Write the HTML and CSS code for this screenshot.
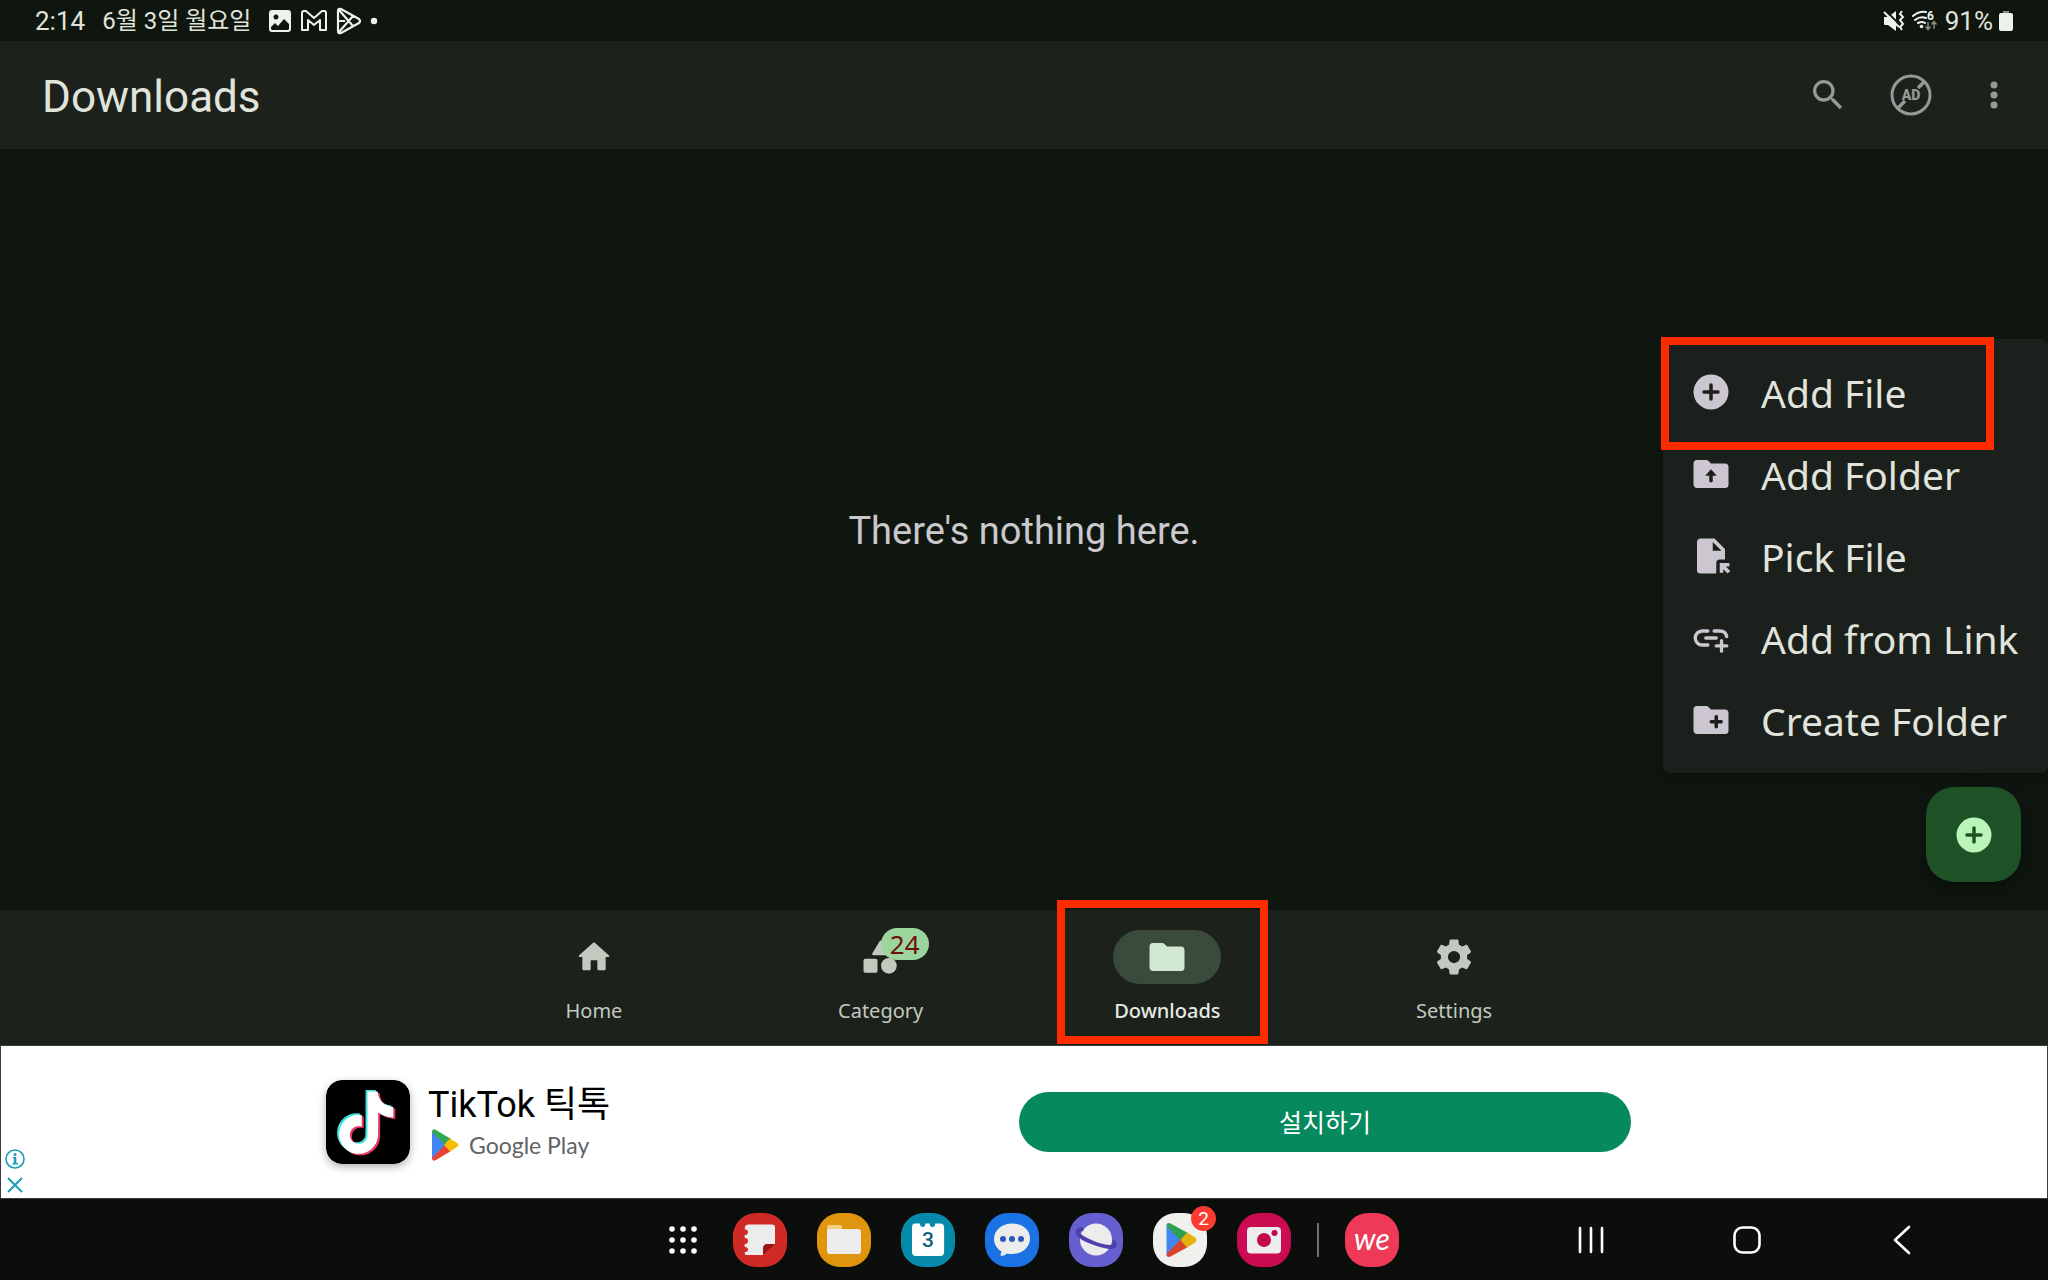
FILE: index.html
```html
<!DOCTYPE html>
<html lang="ko">
<head>
<meta charset="utf-8">
<title>Downloads</title>
<meta name="viewport" content="width=device-width, initial-scale=1">
<link rel="stylesheet" href="styles.css">
</head>
<body>
<div class="screen">
  <div class="status">
    <div class="status-left">
      <span class="clock">2:14</span>
      <span class="date">6월 3일 월요일</span>
      <span class="notices">
        <svg width="24" height="24" viewBox="0 0 24 24"><path fill="#eef1ec" fill-rule="evenodd" d="M4 1h16a3 3 0 0 1 3 3v16a3 3 0 0 1-3 3H4a3 3 0 0 1-3-3V4a3 3 0 0 1 3-3zM3 18v2l1 1h16l1-1v-5l-5-5-6 7-3-3zM8 5.500a2.500 2.500 0 1 0 .01 0z"/></svg>
        <svg width="28" height="24" viewBox="0 0 28 24"><path fill="none" stroke="#eef1ec" stroke-width="2" stroke-linejoin="round" d="M2 21V4q0-2 2-2h2l8 7 8-7h2q2 0 2 2v17h-6V11l-6 5-6-5v10z"/></svg>
        <svg width="26" height="28" viewBox="0 0 26 28"><path fill="none" stroke="#eef1ec" stroke-width="2.200" stroke-linejoin="round" d="M2 4q0-3 3-2l18 10q2 2 0 4L5 26q-3 1-3-2zM3 3l14 16M3 25L17 9M9 14l-6 0"/></svg>
        <svg width="8" height="8" viewBox="0 0 8 8"><circle cx="4" cy="4" r="3.200" fill="#eef1ec"/></svg>
      </span>
    </div>
    <div class="status-right">
      <svg width="22" height="22" viewBox="0 0 22 22"><path fill="#eef1ec" d="M1 7h4l8-6v20l-8-6H2q-1 0-1-1z"/><path fill="none" stroke="#101710" stroke-width="2" d="M3 1l13 13"/><path fill="none" stroke="#eef1ec" stroke-width="2" d="M1 2l15 15M19 1l-2 3 3 3-3 3 3 4-3 3 2 3"/></svg>
      <svg width="28" height="22" viewBox="0 0 28 22"><path fill="none" stroke="#eef1ec" stroke-width="2" stroke-linecap="round" d="M2 6q6-5 13-4M4 10q5-4 11-2M7 13q4-2 7 0"/><circle cx="10.500" cy="16.500" r="1.800" fill="#eef1ec"/><path fill="none" stroke="#858b84" stroke-width="1.500" d="M17 12v7M14.500 16.500l2.500 3 2.500-3M23 19v-7M20.500 14.500l2.500-3 2.500 3"/><text class="wifi-gen" x="16" y="10">6</text></svg>
      <span class="battery-text">91%</span>
      <svg width="14" height="22" viewBox="0 0 14 22"><path fill="#858b84" d="M4 1h6v3H4z"/><rect y="3" width="14" height="18" rx="2" fill="#eef1ec"/></svg>
    </div>
  </div>

  <header class="appbar">
    <h1>Downloads</h1>
    <div class="actions">
      <button aria-label="Search"><svg width="40" height="40" viewBox="0 0 24 24"><path fill="#959b94" d="M15.500 14h-.79l-.28-.27A6.470 6.470 0 0 0 16 9.500 6.500 6.500 0 1 0 9.500 16c1.610 0 3.090-.59 4.230-1.570l.27.28v.79l5 4.990L20.490 19zm-6 0C7.010 14 5 11.990 5 9.500S7.010 5 9.500 5 14 7.010 14 9.500 11.990 14 9.500 14z"/></svg></button>
      <button aria-label="Remove ads"><svg width="42" height="42" viewBox="0 0 42 42"><circle cx="21" cy="21" r="19" fill="none" stroke="#959b94" stroke-width="3"/><path stroke="#959b94" stroke-width="3.500" d="M8 34l7-7M28 14l7-7"/><text class="ad-glyph" x="21" y="26" text-anchor="middle">AD</text></svg></button>
      <button aria-label="More options"><svg width="40" height="40" viewBox="0 0 24 24"><g fill="#959b94"><circle cx="12" cy="6" r="2.100"/><circle cx="12" cy="12" r="2.100"/><circle cx="12" cy="18" r="2.100"/></g></svg></button>
    </div>
  </header>

  <main class="content">
    <p class="empty">There's nothing here.</p>
    <div class="menu" role="menu">
      <button class="menu-item" role="menuitem"><svg width="42" height="42" viewBox="0 0 24 24"><path d="M12 2a10 10 0 1 0 0 20 10 10 0 0 0 0-20zm4 11h-3v3q0 1-1 1t-1-1v-3H8q-1 0-1-1t1-1h3V8q0-1 1-1t1 1v3h3q1 0 1 1t-1 1z"/></svg>Add File<span class="mark mark-menu"></span></button>
      <button class="menu-item" role="menuitem"><svg width="42" height="42" viewBox="0 0 24 24"><path d="M20 6h-8l-1.400-1.400Q10 4 9.200 4H4a2 2 0 0 0-2 2v12c0 1.100.9 2 2 2h16a2 2 0 0 0 2-2V8a2 2 0 0 0-2-2zm-7 7v3q0 .8-1 .8t-1-.8v-3H8.700L12 9.300l3.300 3.700z"/></svg>Add Folder</button>
      <button class="menu-item" role="menuitem"><svg width="42" height="42" viewBox="0 0 24 24"><path d="M15 22H6a2 2 0 0 1-2-2V4c0-1.100.9-2 2-2h8l6 6v6h-3a2 2 0 0 0-2 2zM13 4v5h5zM17 16h5.500v2h-2l2.500 2.500-1.500 1.500-2.500-2.500v2h-2z"/></svg>Pick File</button>
      <button class="menu-item" role="menuitem"><svg width="42" height="42" viewBox="0 0 24 24"><path fill="none" stroke="#cbc6d0" stroke-width="1.900" stroke-linecap="round" d="M10.200 8H7a4 4 0 0 0 0 8h3.200M13.800 8H17q3.400 0 4 3.200M9 12h6M18 13.500v6M15 16.500h6"/></svg>Add from Link</button>
      <button class="menu-item" role="menuitem"><svg width="42" height="42" viewBox="0 0 24 24"><path d="M20 6h-8l-1.400-1.400Q10 4 9.200 4H4a2 2 0 0 0-2 2v12c0 1.100.9 2 2 2h16a2 2 0 0 0 2-2V8a2 2 0 0 0-2-2zm-2 8h-2v2q0 .8-1 .8t-1-.8v-2h-2q-.8 0-.8-1t.8-1h2v-2q0-.8 1-.8t1 .8v2h2q.8 0 .8 1t-.8 1z"/></svg>Create Folder</button>
    </div>
    <button class="fab" aria-label="Add"><svg width="42" height="42" viewBox="0 0 24 24"><path fill="#b9f5b8" d="M12 2a10 10 0 1 0 0 20 10 10 0 0 0 0-20zm4 11h-3v3q0 1-1 1t-1-1v-3H8q-1 0-1-1t1-1h3V8q0-1 1-1t1 1v3h3q1 0 1 1t-1 1z"/></svg></button>
  </main>

  <nav class="tabs">
    <a class="tab" href="#home"><span class="pill"><svg width="40" height="40" viewBox="0 0 24 24"><path fill="#c2c9be" d="M10 19v-5h4v5c0 .55.45 1 1 1h3c.55 0 1-.45 1-1v-7h1.700c.46 0 .68-.57.33-.87L12.670 3.600c-.38-.34-.96-.34-1.340 0l-8.360 7.530c-.34.3-.13.87.33.87H5v7c0 .55.45 1 1 1h3c.55 0 1-.45 1-1z"/></svg></span><span>Home</span></a>
    <a class="tab" href="#category"><span class="pill"><svg width="42" height="42" viewBox="0 0 24 24"><path fill="#c2c9be" d="M11.200 3L7 10q-.4 1 .7 1h8.600q1.100 0 .7-1L12.800 3q-.8-1-1.600 0zM3 13h6q1 0 1 1v6q0 1-1 1H3q-1 0-1-1v-6q0-1 1-1z"/><circle cx="16.500" cy="17" r="4.500" fill="#c2c9be"/></svg><span class="badge">24</span></span><span>Category</span></a>
    <a class="tab active" href="#downloads"><span class="pill"><svg width="42" height="42" viewBox="0 0 24 24"><path fill="#d3e8d0" d="M20 6h-8l-1.400-1.400Q10 4 9.200 4H4a2 2 0 0 0-2 2v12c0 1.100.9 2 2 2h16a2 2 0 0 0 2-2V8a2 2 0 0 0-2-2z"/></svg></span><span>Downloads</span><span class="mark mark-tab"></span></a>
    <a class="tab" href="#settings"><span class="pill"><svg width="42" height="42" viewBox="0 0 24 24"><path fill="#c2c9be" d="M19.430 12.980c.04-.32.07-.64.07-.98s-.03-.66-.07-.98l2.110-1.650c.19-.15.24-.42.12-.64l-2-3.460c-.12-.22-.39-.3-.61-.22l-2.490 1c-.52-.4-1.080-.73-1.690-.98l-.38-2.650A.49.49 0 0 0 14 2h-4c-.25 0-.46.18-.49.42l-.38 2.650c-.61.25-1.170.59-1.690.98l-2.490-1c-.23-.09-.49 0-.61.22l-2 3.460c-.13.22-.07.49.12.64l2.110 1.650c-.04.32-.07.65-.07.98s.03.66.07.98l-2.110 1.650c-.19.15-.24.42-.12.64l2 3.460c.12.22.39.3.61.22l2.490-1c.52.4 1.080.73 1.690.98l.38 2.650c.03.24.24.42.49.42h4c.25 0 .46-.18.49-.42l.38-2.650c.61-.25 1.170-.59 1.690-.98l2.490 1c.23.09.49 0 .61-.22l2-3.460c.12-.22.07-.49-.12-.64zM12 15.500a3.500 3.500 0 1 1 0-7 3.500 3.500 0 0 1 0 7z"/></svg></span><span>Settings</span></a>
  </nav>

  <aside class="ad">
    <div class="ad-app">
      <svg class="ad-logo" width="84" height="84" viewBox="0 0 84 84">
        <defs><path id="note" d="M12.525.02c1.310-.02 2.610-.01 3.910-.02.08 1.530.63 3.090 1.750 4.170 1.120 1.110 2.700 1.620 4.240 1.790v4.030c-1.440-.05-2.890-.35-4.200-.97-.57-.26-1.100-.59-1.620-.93-.01 2.920.01 5.840-.02 8.750-.08 1.400-.54 2.790-1.350 3.940-1.310 1.920-3.580 3.170-5.910 3.210-1.430.08-2.860-.31-4.080-1.030-2.020-1.190-3.440-3.370-3.650-5.710-.02-.5-.03-1-.01-1.490.18-1.900 1.120-3.720 2.580-4.960 1.660-1.440 3.980-2.130 6.150-1.720.02 1.480-.04 2.960-.04 4.440-.99-.32-2.150-.23-3.020.37-.63.41-1.110 1.040-1.360 1.750-.21.51-.15 1.070-.14 1.610.24 1.640 1.820 3.020 3.500 2.870 1.120-.01 2.190-.66 2.770-1.610.19-.33.4-.67.41-1.060.1-1.790.06-3.570.07-5.360.01-4.030-.01-8.050.02-12.070z"/></defs>
        <rect width="84" height="84" rx="16" fill="#000"/>
        <use href="#note" transform="translate(7 10) scale(2.600)" fill="#3fe3df"/>
        <use href="#note" transform="translate(11 13) scale(2.600)" fill="#e8375f"/>
        <use href="#note" transform="translate(9 11.500) scale(2.600)" fill="#fff"/>
      </svg>
      <div class="ad-text">
        <div class="ad-title">TikTok 틱톡</div>
        <div class="ad-store"><svg width="28" height="32" viewBox="0 0 28 32"><path fill="#4285f4" d="M1 2v28l14-14z"/><path fill="#34a853" d="M1 3q0-4 4-2l15 9-6 6z"/><path fill="#ea4335" d="M1 29q0 4 4 2l15-9-6-6z"/><path fill="#fbbc04" d="M19 9.500l7 4.500q3 2 0 4l-7 4.500L13 16z"/></svg>Google Play</div>
      </div>
    </div>
    <button class="install">설치하기</button>
    <div class="ad-choices">
      <button aria-label="Ad info"><svg width="20" height="20" viewBox="0 0 20 20"><circle cx="10" cy="10" r="9" fill="none" stroke="#1c9db8" stroke-width="1.600"/><circle cx="10" cy="5.500" r="1.500" fill="#1c9db8"/><path fill="#1c9db8" d="M8 8h3.300v6H13v1.500H7.500V14h1.300V9.500H8z"/></svg></button>
      <button aria-label="Close ad"><svg width="20" height="20" viewBox="0 0 20 20"><path stroke="#1c9db8" stroke-width="2" d="M3 3l14 14M17 3L3 17"/></svg></button>
    </div>
  </aside>

  <footer class="taskbar">
    <div class="dock">
      <button class="all-apps" aria-label="All apps"><svg width="30" height="30" viewBox="0 0 30 30"><g fill="#fff"><circle cx="4" cy="4" r="2.800"/><circle cx="15" cy="4" r="2.800"/><circle cx="26" cy="4" r="2.800"/><circle cx="4" cy="15" r="2.800"/><circle cx="15" cy="15" r="2.800"/><circle cx="26" cy="15" r="2.800"/><circle cx="4" cy="26" r="2.800"/><circle cx="15" cy="26" r="2.800"/><circle cx="26" cy="26" r="2.800"/></g></svg></button>
      <button class="app" aria-label="Notes"><svg class="tile notes" viewBox="0 0 54 54"><path fill="#ececec" d="M15 11.500h24q3 0 3 3V31H35q-5 0-5 5v6H13q-2-1-1-3 3 0 3-2.500T12 34q-1-2 0-3 3 0 3-3t-3-3q-1-2 0-3 3 0 3-3t-3-2.500q-1-4 3-5z"/><path fill="#971617" d="M30 42v-6q0-5 5-5h7z"/></svg></button>
      <button class="app" aria-label="My Files"><svg class="tile files" viewBox="0 0 54 54"><path fill="#f5ce86" d="M10 19v-5q0-2 2-2h11q2 0 2 2v2h12v6H10z"/><rect x="10" y="16" width="34" height="25" rx="3" fill="#ececec"/></svg></button>
      <button class="app" aria-label="Calendar"><svg class="tile calendar" viewBox="0 0 54 54"><path fill="#fff" d="M14 10.500h5q0 3.500 2.700 3.500t2.600-3.500h4.400q0 3.500 2.800 3.500t2.600-3.500h5q4 0 4 4V39q0 4-4 4H15q-4 0-4-4V14.500q0-4 3-4z"/><text class="day" x="27" y="34" text-anchor="middle">3</text></svg></button>
      <button class="app" aria-label="Messages"><svg class="tile messages" viewBox="0 0 54 54"><path fill="#ececec" d="M27 10.500c10 0 18 6 18 15s-8 15.500-18 15.500q-3 0-5-.6-3 2.600-6 2.600-1-1 .6-4.500C12 36 9 31 9 26c0-9 8-15.500 18-15.500z"/><g fill="#2a58b8"><circle cx="18" cy="26" r="3"/><circle cx="27" cy="26" r="3"/><circle cx="36" cy="26" r="3"/></g></svg></button>
      <button class="app" aria-label="Internet"><svg class="tile internet" viewBox="0 0 54 54"><circle cx="27" cy="26.500" r="16" fill="#ececec"/><path fill="none" stroke="#5040ae" stroke-width="4" stroke-linecap="round" d="M13 16q-7 1-3 6c5 5 21 11 30 12q8 0 5-5"/></svg></button>
      <button class="app" aria-label="Play Store"><svg class="tile play" viewBox="0 0 54 54"><path fill="#4285f4" d="M13.500 12v30L28 27z"/><path fill="#2fa04e" d="M13.500 13q0-4 4-2.500L35 20l-7 8z"/><path fill="#d9442f" d="M13.500 41q0 4 4 2.500L35 34l-7-8z"/><path fill="#e3b00e" d="M34 19.500l8 5q3 2.500 0 5l-8 5L27.500 27z"/></svg><span class="count">2</span></button>
      <button class="app" aria-label="Camera"><svg class="tile camera" viewBox="0 0 54 54"><rect x="10" y="14" width="34" height="26.500" rx="4" fill="#ececec"/><circle cx="27" cy="27" r="7" fill="#c4084f"/><circle cx="37.500" cy="20" r="3" fill="#c4084f"/></svg></button>
      <span class="divider"></span>
      <button class="app" aria-label="we"><span class="tile we">we</span></button>
    </div>
    <div class="system">
      <button aria-label="Recents"><svg width="30" height="30" viewBox="0 0 30 30"><path fill="none" stroke="#fff" stroke-width="2.600" stroke-linecap="round" d="M4 3v24M15 3v24M26 3v24"/></svg></button>
      <button aria-label="Home"><svg width="30" height="30" viewBox="0 0 30 30"><rect x="2.500" y="2.500" width="25" height="25" rx="8" fill="none" stroke="#fff" stroke-width="2.600"/></svg></button>
      <button aria-label="Back"><svg width="30" height="30" viewBox="0 0 30 30"><path fill="none" stroke="#fff" stroke-width="2.600" stroke-linecap="round" stroke-linejoin="round" d="M21 2L7 15l14 13"/></svg></button>
    </div>
  </footer>
</div>
</body>
</html>
```
FILE: styles.css
```css
* {
  box-sizing: border-box;
}

body {
  margin: 0;
  background: #0f160f;
  color: #e1e4dd;
  font-family: Roboto, "Noto Sans CJK KR", sans-serif;
}

button {
  margin: 0;
  padding: 0;
  border: 0;
  background: none;
  color: inherit;
  font: inherit;
  display: flex;
  align-items: center;
  justify-content: center;
}

svg {
  display: block;
  flex: none;
}

.screen {
  min-height: 100vh;
  display: flex;
  flex-direction: column;
}

/* Status bar */
.status {
  height: 41px;
  padding: 0 35px;
  display: flex;
  align-items: center;
  justify-content: space-between;
  font-size: 26px;
  line-height: 40px;
}

.status-left,
.status-right,
.notices {
  display: flex;
  align-items: center;
}

.status-left {
  gap: 17px;
}

.date {
  font-size: 24px;
}

.notices {
  gap: 8px;
}

.status-right {
  gap: 6px;
}

.wifi-gen {
  fill: #eef1ec;
  font-size: 12px;
  font-weight: 700;
}

/* App bar */
.appbar {
  height: 108px;
  padding: 0 13px 0 42px;
  display: flex;
  align-items: center;
  justify-content: space-between;
  background: #1c211c;
}

h1 {
  margin: 0;
  padding-top: 4px;
  font-size: 44px;
  line-height: 52px;
  font-weight: 400;
}

.actions {
  display: flex;
}

.actions button {
  width: 83px;
  height: 83px;
}

.ad-glyph {
  fill: #959b94;
  font-size: 14px;
  font-weight: 900;
}

/* File list */
.content {
  flex: 1;
  position: relative;
  display: flex;
  align-items: center;
  justify-content: center;
}

.empty {
  margin: 0;
  padding-top: 2px;
  color: #cac8cd;
  font-size: 38px;
  line-height: 48px;
}

.menu {
  position: absolute;
  right: 0;
  bottom: 137px;
  width: 385px;
  padding: 12px 0;
  border-radius: 8px;
  background: #1c201c;
  box-shadow: 0 4px 12px rgba(0, 0, 0, 0.3);
}

.menu-item {
  position: relative;
  width: 100%;
  height: 82px;
  padding-left: 27px;
  justify-content: flex-start;
  gap: 29px;
  font-family: "Noto Sans", sans-serif;
  font-size: 39px;
  white-space: nowrap;
}

.menu-item svg {
  fill: #cbc6d0;
}

.mark {
  position: absolute;
  border: 8px solid #ff2b00;
  pointer-events: none;
}

.mark-menu {
  inset: -14px 54px -17px -2px;
}

.fab {
  position: absolute;
  right: 27px;
  bottom: 28px;
  width: 95px;
  height: 95px;
  border-radius: 28px;
  background: #1f5127;
  box-shadow: 0 6px 16px rgba(0, 0, 0, 0.4);
}

/* Bottom navigation */
.tabs {
  height: 135px;
  display: flex;
  justify-content: center;
  background: #1c211c;
}

.tab {
  position: relative;
  width: 14%;
  padding-top: 20px;
  display: flex;
  flex-direction: column;
  align-items: center;
  gap: 13px;
  color: #c2c9be;
  font-family: "Noto Sans", sans-serif;
  font-size: 20px;
  line-height: 28px;
  text-decoration: none;
}

.pill {
  position: relative;
  width: 108px;
  height: 54px;
  border-radius: 27px;
  display: flex;
  align-items: center;
  justify-content: center;
}

.active {
  color: #e6ebe2;
  font-weight: 500;
}

.active .pill {
  background: #3b4b3b;
}

.badge {
  position: absolute;
  left: 54px;
  top: -2px;
  width: 48px;
  height: 32px;
  border-radius: 16px;
  background: #9bd59c;
  color: #6b0f0c;
  font-size: 26px;
  line-height: 32px;
  text-align: center;
}

.mark-tab {
  inset: -10px 43px 1px 33px;
}

/* Banner */
.ad {
  position: relative;
  height: 154px;
  padding: 0 325px;
  display: flex;
  align-items: center;
  justify-content: space-between;
  border: 1px solid #3b3b3b;
  background: #fff;
  color: #000;
}

.ad-app {
  display: flex;
  align-items: center;
  gap: 18px;
}

.ad-logo {
  border-radius: 16px;
  box-shadow: 0 3px 8px rgba(0, 0, 0, 0.3);
}

.ad-text {
  padding-top: 2px;
}

.ad-title {
  font-size: 36px;
  line-height: 44px;
}

.ad-store {
  padding-left: 3px;
  display: flex;
  align-items: center;
  gap: 10px;
  color: #5f6368;
  font-family: Lato, sans-serif;
  font-size: 23px;
  line-height: 36px;
}

.install {
  width: 612px;
  height: 60px;
  margin-right: 91px;
  padding-bottom: 2px;
  border-radius: 30px;
  background: #07895f;
  color: #fff;
  font-size: 25px;
}

.ad-choices {
  position: absolute;
  left: 4px;
  bottom: 3px;
  display: grid;
  gap: 6px;
}

/* Taskbar */
.taskbar {
  height: 81px;
  padding-left: 14px;
  display: grid;
  grid-template-columns: 1fr auto 1fr;
  align-items: center;
  background: #0b0e0b;
}

.dock {
  grid-column: 2;
  display: flex;
  align-items: center;
}

.all-apps {
  width: 70px;
  height: 54px;
}

.app {
  position: relative;
  width: 84px;
  height: 54px;
}

.tile {
  width: 54px;
  height: 54px;
  border-radius: 23px;
}

.notes { background: #d02a26; }
.files { background: #e0960c; }
.calendar { background: #078aa9; }
.messages { background: #1a72e4; }
.internet { background: #665fd0; }
.play { background: #f0f0ee; }
.camera { background: #cb0c52; }

.day {
  fill: #126080;
  font-size: 21px;
  font-weight: 500;
}

.we {
  background: #ee3957;
  color: #fff;
  font-family: Lato, sans-serif;
  font-size: 30px;
  font-style: italic;
  line-height: 50px;
  text-align: center;
}

.count {
  position: absolute;
  right: 6px;
  top: -7px;
  width: 25px;
  height: 25px;
  border-radius: 50%;
  background: #fb3b30;
  color: #fff;
  font-size: 19px;
  line-height: 25px;
}

.divider {
  width: 2px;
  height: 34px;
  margin: 0 11px;
  background: #6e706e;
}

.system {
  padding-right: 67px;
  display: flex;
  justify-content: flex-end;
}

.system button {
  width: 156px;
  height: 60px;
}
```
